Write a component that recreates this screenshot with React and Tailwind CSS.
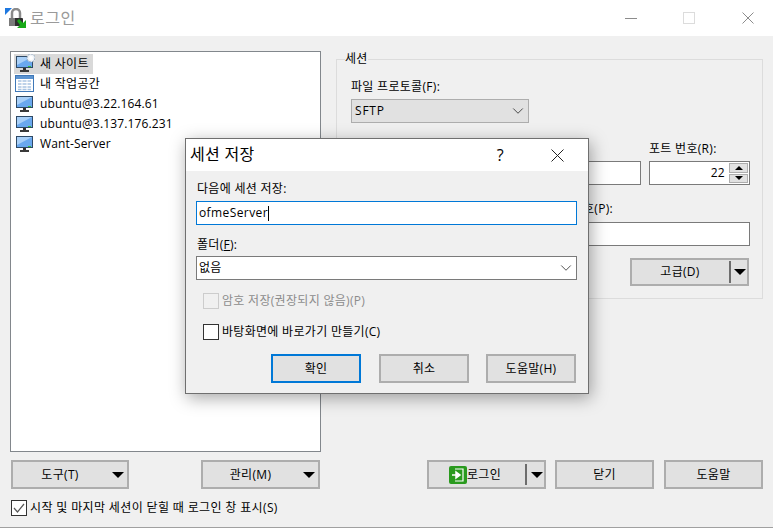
import { ChevronDown } from 'lucide-react';

const FONT = "font-['Open_Sans','Noto_Sans_CJK_KR',sans-serif]";

function Cross({ size, color }) {
  return (
    <svg width={size} height={size} viewBox={`0 0 ${size} ${size}`} className="shrink-0">
      <path d={`M0.5 0.5L${size - 0.5} ${size - 0.5}M${size - 0.5} 0.5L0.5 ${size - 0.5}`} stroke={color} strokeWidth="1" />
    </svg>
  );
}

function Monitor({ badge }) {
  return (
    <svg width="20" height="20" viewBox="0 0 20 20" className="shrink-0">
      <rect x="1" y="2" width="17" height="12" fill="#2f4a66" />
      <rect x="2" y="3" width="15" height="10" fill="#6aa8ee" />
      <path d="M2 3h15L2 11z" fill="#a9d0f8" />
      <rect x="13" y="12" width="3" height="1" fill="#35c035" />
      <rect x="8" y="14" width="3" height="2" fill="#333" />
      <rect x="5" y="16" width="9" height="2" fill="#3a3a3a" />
      {badge && (
        <g>
          <circle cx="16" cy="4" r="4" fill="#eef3f8" stroke="#8fa3b8" strokeWidth="1" strokeDasharray="2 1" />
          <circle cx="16" cy="4" r="2" fill="#fff" />
        </g>
      )}
    </svg>
  );
}

function Workspace() {
  return (
    <svg width="20" height="20" viewBox="0 0 20 20" className="shrink-0">
      <rect x="0.5" y="1.5" width="18" height="16" fill="#fff" stroke="#3f78b8" />
      <rect x="1" y="2" width="17" height="3" fill="#5d94d0" />
      <path d="M3 7h13M3 10h13M3 13h13M3 15.5h13" stroke="#a9c4e2" strokeWidth="1.5" />
      <path d="M7 6v11M12 6v11" stroke="#fff" strokeWidth="1" />
    </svg>
  );
}

function Arrow() {
  return <span className="w-0 h-0 border-x-[6px] border-x-transparent border-t-[6px] border-t-black" />;
}

function Btn({ className = '', children }) {
  return (
    <div className={`h-[29px] flex items-center justify-center bg-[#e1e1e1] border-2 border-[#adadad] text-[12px] text-black ${className}`}>
      {children}
    </div>
  );
}

function Field({ className = '', children }) {
  return <div className={`h-6 bg-white border border-[#7a7a7a] ${className}`}>{children}</div>;
}

const SITES = [
  { label: '새 사이트', icon: <Monitor badge />, active: true },
  { label: '내 작업공간', icon: <Workspace /> },
  { label: 'ubuntu@3.22.164.61', icon: <Monitor />, latin: true },
  { label: 'ubuntu@3.137.176.231', icon: <Monitor />, latin: true },
  { label: 'Want-Server', icon: <Monitor />, latin: true },
];

export default function App() {
  return (
    <div className={`relative w-[773px] h-[528px] overflow-hidden bg-[#f0f0f0] flex flex-col border-b border-[#a0a0a0] text-[12px] tracking-[0.3px] text-black ${FONT}`}>
      {/* main window title */}
      <header className="h-9 shrink-0 bg-white flex items-center pl-[5px]">
        <svg width="22" height="21" viewBox="0 0 22 21" className="shrink-0">
          <path d="M0 0h7L0 7z" fill="#1e78e0" />
          <path d="M7 10V5a4 4 0 0 1 8 0v5" fill="none" stroke="#8a8a8a" strokeWidth="2.5" />
          <rect x="4" y="10" width="14" height="8" rx="1" fill="#2e2e2e" />
          <rect x="4" y="10" width="6" height="8" fill="#7a7a7a" />
          <path d="M21 20H12l3-3-3-4 2-2 4 4 3-3z" fill="#16a816" />
        </svg>
        <span className="ml-[3px] text-[16px] tracking-[0.5px] text-[#9a9a9a]">로그인</span>
        <div className="ml-auto flex items-center mr-[19px]">
          <span className="w-3 h-px bg-[#8c8c8c]" />
          <span className="ml-[46px] w-3 h-3 border border-[#dcdcdc]" />
          <span className="ml-[47px] flex"><Cross size={12} color="#8c8c8c" /></span>
        </div>
      </header>

      <div className="flex-1 flex pl-[10px] pr-[10px]">
        {/* left column */}
        <div className="w-[311px] shrink-0 flex flex-col pt-[15px]">
          <div className="h-[401px] bg-white border border-[#82878c] p-[2px] pl-[3px] flex flex-col">
            {SITES.map((s) => (
              <div key={s.label} className="h-5 flex items-center">
                <div className={`h-5 flex items-center gap-[5px] pl-[1px] pr-1 ${s.active ? 'bg-[#d9d9d9]' : ''}`}>
                  {s.icon}
                  <span className={`whitespace-nowrap ${s.latin ? 'tracking-[0.15px]' : ''}`}>{s.label}</span>
                </div>
              </div>
            ))}
          </div>
          <div className="flex justify-between mt-2 pl-px pr-px">
            <Btn className="w-[118px] relative">
              <span className="pr-[20px]">도구(T)</span>
              <span className="absolute right-[3px] flex"><Arrow /></span>
            </Btn>
            <Btn className="w-[119px] relative">
              <span className="pr-[20px]">관리(M)</span>
              <span className="absolute right-[3px] flex"><Arrow /></span>
            </Btn>
          </div>
          <div className="flex items-center mt-[10px] pl-px gap-[3px]">
            <span className="w-4 h-4 bg-white border border-[#333] flex items-center justify-center">
              <svg width="12" height="12" viewBox="0 0 12 12"><path d="M1 6l3.5 4L11 2" fill="none" stroke="#555" strokeWidth="1.2" /></svg>
            </span>
            <span className="whitespace-nowrap tracking-[0.36px]">시작 및 마지막 세션이 닫힐 때 로그인 창 표시(S)</span>
          </div>
        </div>

        {/* right column */}
        <div className="ml-[15px] flex-1 flex flex-col pt-[16px]">
          <fieldset className="relative h-[247px] border border-[#dcdcdc] pl-[14px] pr-[12px]">
            <legend className="-ml-[6px] px-0 leading-[14px] -mb-[7px]">세션</legend>
            <div className="mt-[19px]">파일 프로토콜(F):</div>
            <div className="mt-[3px] w-[178px] h-6 bg-[#e1e1e1] border border-[#adadad] flex items-center justify-between pl-[3px] pr-px">
              <span className="tracking-[0.8px]">SFTP</span>
              <ChevronDown size={18} strokeWidth={0.9} />
            </div>
            <div className="flex gap-2 mt-[17px]">
              <div className="w-[290px]">
                <div className="leading-[17px]">호스트 이름(H):</div>
                <Field className="mt-[4px]" />
              </div>
              <div className="w-[101px]">
                <div className="leading-[17px]">포트 번호(R):</div>
                <Field className="mt-[4px] flex items-center justify-end relative pr-[24px]">
                  22
                  <div className="absolute right-px top-px w-[19px] h-5 flex flex-col gap-px">
                    <span className="h-[10px] bg-[#e1e1e1] border border-[#adadad] flex items-center justify-center">
                      <span className="w-0 h-0 border-x-[4px] border-x-transparent border-b-[4px] border-b-black" />
                    </span>
                    <span className="h-[10px] bg-[#e1e1e1] border border-[#adadad] flex items-center justify-center">
                      <span className="w-0 h-0 border-x-[4px] border-x-transparent border-t-[4px] border-t-black" />
                    </span>
                  </div>
                </Field>
              </div>
            </div>
            <div className="flex gap-2 mt-[15px]">
              <div className="w-[190px]">
                <div className="leading-[17px]">사용자 이름(U):</div>
                <Field className="mt-[5px]" />
              </div>
              <div className="flex-1">
                <div className="leading-[17px]">비밀번호(P):</div>
                <Field className="mt-[5px]" />
              </div>
            </div>
            <div className="flex justify-end mt-[12px] pr-px">
              <Btn className="w-[119px] !h-[28px] relative">
                <span className="pr-[19px]">고급(D)</span>
                <span className="absolute right-[16px] top-[1px] w-[2px] h-[22px] bg-[#6d6d6d]" />
                <span className="absolute right-[1px] flex"><Arrow /></span>
              </Btn>
            </div>
          </fieldset>

          <div className="flex mt-[161px] justify-end gap-[10px]">
            <Btn className="w-[119px] -mr-px relative">
              <span className="absolute left-[20px] top-[4px] w-[18px] h-[18px] rounded-[2px] bg-[#2a9a1e] flex items-center justify-center">
                <svg width="14" height="14" viewBox="0 0 14 14">
                  <path d="M4 1h8v12H4" fill="none" stroke="#fff" strokeWidth="1.2" />
                  <path d="M1 7h5M5 4v6l4-3z" stroke="#fff" strokeWidth="1.5" fill="#fff" />
                </svg>
              </span>
              <span className="pl-[16px] pr-[21px]">로그인</span>
              <span className="absolute right-[17px] top-[2px] w-[2px] h-[21px] bg-[#6d6d6d]" />
              <span className="absolute right-[1px] flex"><Arrow /></span>
            </Btn>
            <Btn className="w-[99px]">닫기</Btn>
            <Btn className="w-[99px]">도움말</Btn>
          </div>
        </div>
      </div>

      {/* save session dialog */}
      <div className="absolute left-[185px] top-[138px] w-[404px] h-[256px] bg-[#f0f0f0] border border-[#6f6f6f] shadow-[2px_4px_16px_rgba(0,0,0,0.35)] flex flex-col">
        <div className="h-8 shrink-0 bg-white flex items-center pl-1">
          <span className="text-[16px] tracking-[0.3px] -mt-[2px]">세션 저장</span>
          <span className="ml-auto text-[16px] mr-[47px]">?</span>
          <span className="mr-[24px] flex"><Cross size={13} color="#222" /></span>
        </div>
        <div className="px-[10px] flex flex-col">
          <div className="mt-[9px] pl-px leading-[17px]">다음에 세션 저장:</div>
          <div className="mt-[4px] h-[24px] w-[381px] bg-white border border-[#0078d7] flex items-center pl-[2px]">
            <span className="tracking-[0.4px]">ofmeServer</span>
            <span className="w-px h-[15px] bg-black" />
          </div>
          <div className="mt-[11px] pl-px leading-[17px]">폴더(<span className="underline">F</span>):</div>
          <div className="mt-[3px] h-[24px] w-[381px] bg-white border border-[#7a7a7a] flex items-center justify-between pl-[2px] pr-px">
            <span>없음</span>
            <ChevronDown size={18} strokeWidth={0.9} />
          </div>
          <div className="mt-[13px] ml-[7px] flex items-center gap-[3px] text-[#8c8c8c]">
            <span className="w-4 h-4 bg-[#f0f0f0] border border-[#cccccc]" />
            <span className="leading-4">암호 저장(권장되지 않음)(P)</span>
          </div>
          <div className="mt-[15px] ml-[7px] flex items-center gap-[3px]">
            <span className="w-4 h-4 bg-white border border-[#333]" />
            <span className="leading-4">바탕화면에 바로가기 만들기(C)</span>
          </div>
          <div className="mt-[14px] flex">
            <Btn className="ml-[75px] w-[90px] !border-[#0078d7]">확인</Btn>
            <Btn className="ml-[18px] w-[90px]">취소</Btn>
            <Btn className="ml-[17px] w-[90px]">도움말(H)</Btn>
          </div>
        </div>
      </div>
    </div>
  );
}
